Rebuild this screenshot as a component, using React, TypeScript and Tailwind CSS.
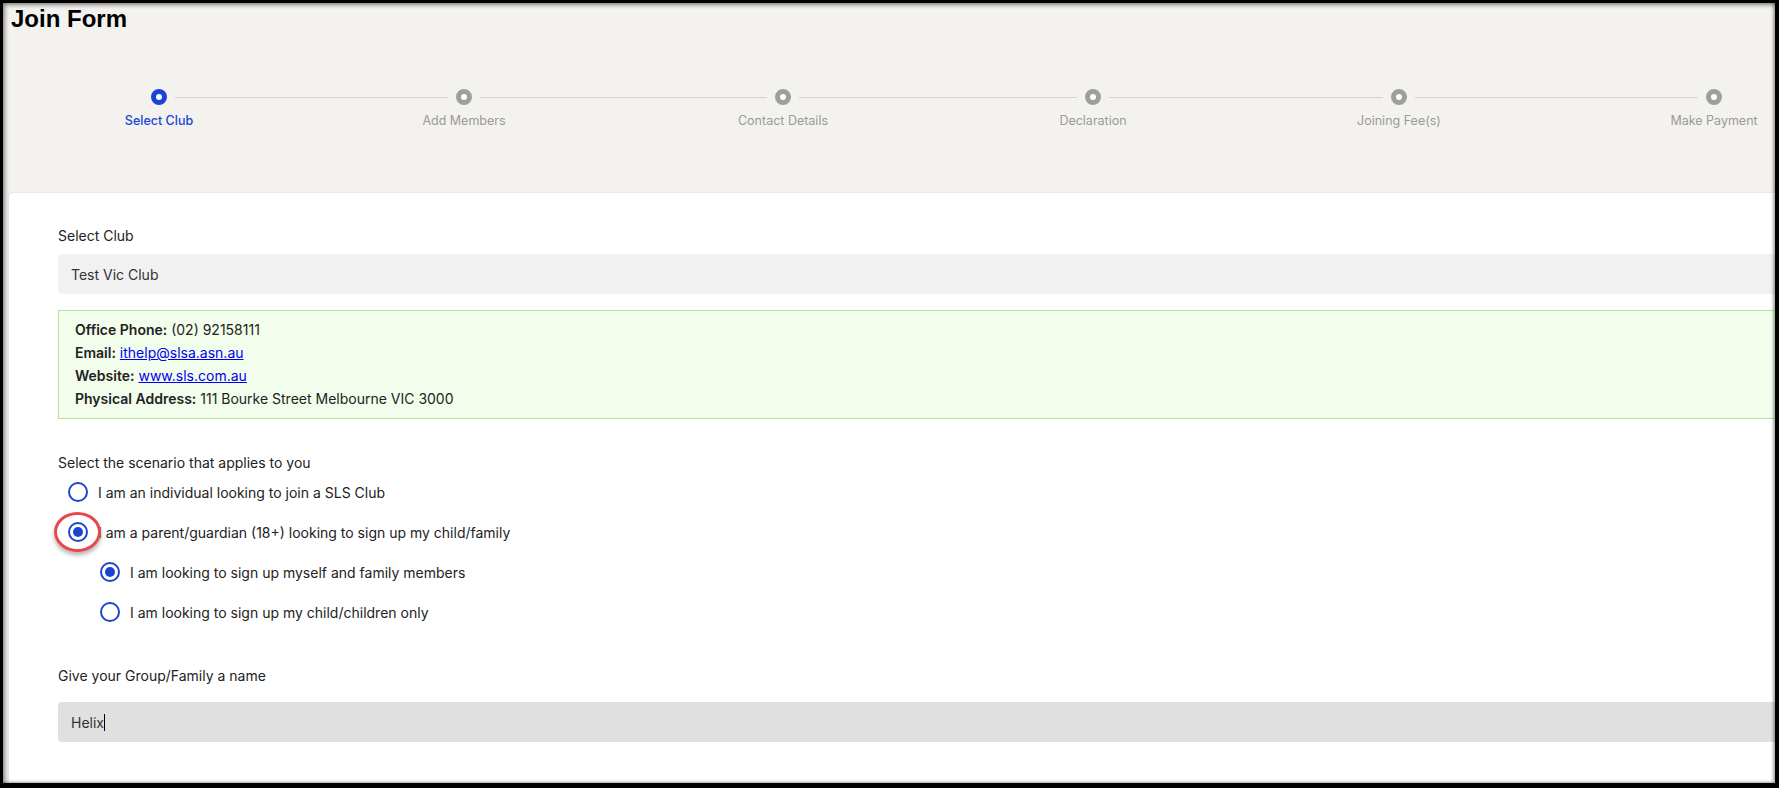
import React from "react";

const steps = [
  "Select Club",
  "Add Members",
  "Contact Details",
  "Declaration",
  "Joining Fee(s)",
  "Make Payment",
];

function Radio({ checked }: { checked: boolean }) {
  return (
    <span className="flex h-5 w-5 shrink-0 items-center justify-center rounded-full border-2 border-[#1a44d6] bg-white">
      {checked && <span className="h-[10px] w-[10px] rounded-full bg-[#1a44d6]" />}
    </span>
  );
}

export default function App() {
  return (
    <div className="h-[788px] w-[1779px] overflow-hidden bg-black pb-[5px] pl-[3px] pr-[4px] pt-[3px]">
      <div
        className="relative h-full w-full overflow-hidden bg-[#f3f2ef] text-[#222]"
        style={{ fontFamily: "Inter, 'Noto Sans', sans-serif" }}
      >
        <div className="w-[1870px]">
          <h1
            className="pl-[8px] pt-[2px] text-[24px] font-bold leading-[28px] text-black"
            style={{ fontFamily: "'Liberation Sans', Arial, sans-serif" }}
          >
            Join Form
          </h1>

          {/* Stepper */}
          <div className="mt-[56px] grid grid-cols-[312px_298px_340px_280px_332px_298px]">
            {steps.map((s, i) => {
              const active = i === 0;
              return (
                <div key={s} className="flex flex-col items-center">
                  <div className="flex h-4 w-full items-center">
                    <div className={`h-px flex-1 ${i === 0 ? "" : "bg-[#d4d4d4]"}`} />
                    <span
                      className={`mx-2 h-4 w-4 shrink-0 rounded-full border-[5px] bg-white ${
                        active ? "border-[#1a44d6]" : "border-[#9e9e9e]"
                      }`}
                    />
                    <div className={`h-px flex-1 ${i === steps.length - 1 ? "" : "bg-[#d4d4d4]"}`} />
                  </div>
                  <div
                    className={`mt-2 text-[12.5px] leading-4 ${
                      active ? "font-medium text-[#1a44d6]" : "text-[#9a9a9a]"
                    }`}
                  >
                    {s}
                  </div>
                </div>
              );
            })}
          </div>

          {/* Card */}
          <div className="ml-[6px] mt-[64px] h-[600px] rounded-tl-[4px] bg-white pb-10 pl-[49px] pt-[33px] text-[14px] shadow-[0_0_2px_rgba(0,0,0,0.12)]">
            <div className="leading-5 text-[#222]">Select Club</div>
            <div className="mt-2 flex h-10 items-center rounded-[4px] bg-[#f1f1f1] pl-[13px] text-[#333]">
              Test Vic Club
            </div>

            <div className="mt-4 border border-[#b2e39a] bg-[#f3fdec] pb-[8px] pl-[16px] pt-[7px] leading-[23px] text-[#222]">
              <div>
                <span className="font-semibold">Office Phone:</span> (02) 92158111
              </div>
              <div>
                <span className="font-semibold">Email:</span>{" "}
                <a href="#" className="text-[#0000ee] underline">
                  ithelp@slsa.asn.au
                </a>
              </div>
              <div>
                <span className="font-semibold">Website:</span>{" "}
                <a href="#" className="text-[#0000ee] underline">
                  www.sls.com.au
                </a>
              </div>
              <div>
                <span className="font-semibold">Physical Address:</span> 111 Bourke Street Melbourne VIC 3000
              </div>
            </div>

            <div className="mt-[34px] leading-5">Select the scenario that applies to you</div>
            <div className="-mt-[1px]">
              <div className="flex h-10 items-center gap-[10px] pl-[10px]">
                <Radio checked={false} />
                <span>I am an individual looking to join a SLS Club</span>
              </div>
              <div className="flex h-10 items-center gap-[10px] pl-[10px]">
                <span className="relative flex">
                  <Radio checked={true} />
                  <span className="absolute -left-[14px] -top-[10px] z-10 h-[40px] w-[47px] rounded-[50%] border-[3px] border-[#e5484d] shadow-[0_3px_4px_rgba(0,0,0,0.3)]" />
                </span>
                <span>I am a parent/guardian (18+) looking to sign up my child/family</span>
              </div>
              <div className="flex h-10 items-center gap-[10px] pl-[42px]">
                <Radio checked={true} />
                <span>I am looking to sign up myself and family members</span>
              </div>
              <div className="flex h-10 items-center gap-[10px] pl-[42px]">
                <Radio checked={false} />
                <span>I am looking to sign up my child/children only</span>
              </div>
            </div>

            <div className="mt-[34px] leading-5">Give your Group/Family a name</div>
            <div className="mt-4 flex h-10 items-center rounded-[4px] bg-[#e0e0e0] pl-[13px] text-[#333]">
              <span>Helix</span>
              <span className="h-[17px] w-px bg-black" />
            </div>
          </div>
        </div>

        <div className="pointer-events-none absolute inset-0 shadow-[inset_2px_2px_4px_rgba(0,0,0,0.45),inset_-2px_-1px_3px_rgba(0,0,0,0.3)]" />
      </div>
    </div>
  );
}
